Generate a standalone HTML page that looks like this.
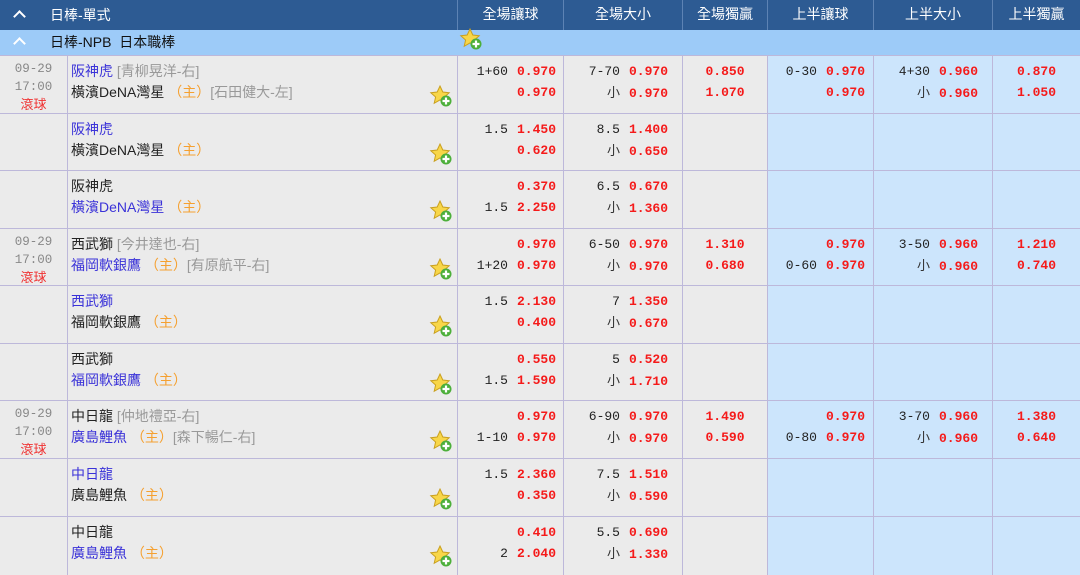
<!DOCTYPE html>
<html><head><meta charset="utf-8">
<style>
*{margin:0;padding:0;box-sizing:border-box}
body{width:1080px;height:561px;overflow:hidden;background:#ebebeb;font-family:"Liberation Sans","Noto Sans CJK TC",sans-serif;position:relative}
.hd{position:absolute;left:0;top:0;width:1080px;height:30px;background:#2d5b93;color:#fff;font-size:14px}
.hd div{position:absolute;top:0;height:30px;line-height:28px;text-align:center;border-left:1px solid #5d83b4}
.sub{position:absolute;left:0;top:30px;width:1080px;height:25px;background:#9dcbf8;font-size:14px;color:#111}
.chev{position:absolute;width:9px;height:9px;border-left:2.5px solid #fff;border-top:2.5px solid #fff;transform:rotate(45deg)}
.row{position:absolute;left:0;width:1080px;height:58px;border-top:1px solid #bdb8da}
.c{position:absolute;top:0;height:58px;border-left:1px solid #bdb8da}
.g{background:#ebebeb}.b{background:#cce5fc}
.t{left:0;width:67px;border-left:none;text-align:center;font-family:"Liberation Mono",monospace;font-size:12.5px;color:#888;line-height:18px;padding-top:4px}
.t span{color:#f03030;font-family:"Liberation Sans","Noto Sans CJK TC",sans-serif;font-size:13px}
.tm{left:67px;width:390px;font-size:14px;line-height:21px;padding:5px 0 0 3px;color:#222}
.bl{color:#3a32d8}.gr{color:#999}.or{color:#f5a030}
.o{font-family:"Liberation Mono",monospace;font-size:13px;line-height:21px;text-align:right;padding-top:5px;color:#222}
.o i{font-style:normal;font-weight:bold;color:#f51a1a;margin-left:9px}
.o .x{font-family:"Liberation Sans","Noto Sans CJK TC",sans-serif;color:#333}
.c1{left:457px;width:106px;padding-right:7px}
.c2{left:563px;width:119px;padding-right:14px}
.c3{left:682px;width:85px;text-align:center}
.c3 i{margin:0}
.c4{left:767px;width:106px;padding-right:8px}
.c5{left:873px;width:119px;padding-right:14px}
.c6{left:992px;width:88px;text-align:center}
.c6 i{margin:0}
.star{position:absolute}
</style></head><body>
<div class="hd">
<span class="chev" style="left:15px;top:12px"></span>
<span style="position:absolute;left:50px;top:5px">日棒-單式</span>
<div style="left:457px;width:106px">全場讓球</div>
<div style="left:563px;width:119px">全場大小</div>
<div style="left:682px;width:85px">全場獨贏</div>
<div style="left:767px;width:106px">上半讓球</div>
<div style="left:873px;width:119px">上半大小</div>
<div style="left:992px;width:88px">上半獨贏</div>
</div>
<div class="sub">
<span class="chev" style="left:15px;top:9px"></span>
<span style="position:absolute;left:50px;top:2px">日棒-NPB&nbsp; 日本職棒</span>
<svg class="star" style="left:459px;top:-3px" width="24" height="24" viewBox="0 0 24 24"><path d="M11 2l2.8 6 6.4.7-4.8 4.3 1.4 6.3L11 16l-5.8 3.3 1.4-6.3L1.8 8.7 8.2 8z" fill="#f8d648" stroke="#c9a020" stroke-width="1"/><circle cx="17" cy="17" r="5.5" fill="#4caf3a"/><path d="M17 13.5v7M13.5 17h7" stroke="#fff" stroke-width="2.2"/></svg>
</div>

<div class="row" style="top:55px">
<div class="c t">09-29<br>17:00<br><span>滾球</span></div>
<div class="c tm g"><span class="bl">阪神虎</span> <span class="gr">[青柳晃洋-右]</span><br>橫濱DeNA灣星 <span class="or">（主）</span><span class="gr">[石田健大-左]</span></div>
<div class="c o g c1">1+60<i>0.970</i><br><i>0.970</i></div>
<div class="c o g c2">7-70<i>0.970</i><br><span class="x">小</span><i>0.970</i></div>
<div class="c o g c3"><i>0.850</i><br><i>1.070</i></div>
<div class="c o b c4">0-30<i>0.970</i><br><i>0.970</i></div>
<div class="c o b c5">4+30<i>0.960</i><br><span class="x">小</span><i>0.960</i></div>
<div class="c o b c6"><i>0.870</i><br><i>1.050</i></div>
</div>
<div class="row" style="top:113px">
<div class="c t"></div>
<div class="c tm g"><span class="bl">阪神虎</span><br>橫濱DeNA灣星 <span class="or">（主）</span></div>
<div class="c o g c1">1.5<i>1.450</i><br><i>0.620</i></div>
<div class="c o g c2">8.5<i>1.400</i><br><span class="x">小</span><i>0.650</i></div>
<div class="c o g c3"></div><div class="c o b c4"></div><div class="c o b c5"></div><div class="c o b c6"></div>
</div>
<div class="row" style="top:170px">
<div class="c t"></div>
<div class="c tm g">阪神虎<br><span class="bl">橫濱DeNA灣星</span> <span class="or">（主）</span></div>
<div class="c o g c1"><i>0.370</i><br>1.5<i>2.250</i></div>
<div class="c o g c2">6.5<i>0.670</i><br><span class="x">小</span><i>1.360</i></div>
<div class="c o g c3"></div><div class="c o b c4"></div><div class="c o b c5"></div><div class="c o b c6"></div>
</div>
<div class="row" style="top:228px">
<div class="c t">09-29<br>17:00<br><span>滾球</span></div>
<div class="c tm g">西武獅 <span class="gr">[今井達也-右]</span><br><span class="bl">福岡軟銀鷹</span> <span class="or">（主）</span><span class="gr">[有原航平-右]</span></div>
<div class="c o g c1"><i>0.970</i><br>1+20<i>0.970</i></div>
<div class="c o g c2">6-50<i>0.970</i><br><span class="x">小</span><i>0.970</i></div>
<div class="c o g c3"><i>1.310</i><br><i>0.680</i></div>
<div class="c o b c4"><i>0.970</i><br>0-60<i>0.970</i></div>
<div class="c o b c5">3-50<i>0.960</i><br><span class="x">小</span><i>0.960</i></div>
<div class="c o b c6"><i>1.210</i><br><i>0.740</i></div>
</div>
<div class="row" style="top:285px">
<div class="c t"></div>
<div class="c tm g"><span class="bl">西武獅</span><br>福岡軟銀鷹 <span class="or">（主）</span></div>
<div class="c o g c1">1.5<i>2.130</i><br><i>0.400</i></div>
<div class="c o g c2">7<i>1.350</i><br><span class="x">小</span><i>0.670</i></div>
<div class="c o g c3"></div><div class="c o b c4"></div><div class="c o b c5"></div><div class="c o b c6"></div>
</div>
<div class="row" style="top:343px">
<div class="c t"></div>
<div class="c tm g">西武獅<br><span class="bl">福岡軟銀鷹</span> <span class="or">（主）</span></div>
<div class="c o g c1"><i>0.550</i><br>1.5<i>1.590</i></div>
<div class="c o g c2">5<i>0.520</i><br><span class="x">小</span><i>1.710</i></div>
<div class="c o g c3"></div><div class="c o b c4"></div><div class="c o b c5"></div><div class="c o b c6"></div>
</div>
<div class="row" style="top:400px">
<div class="c t">09-29<br>17:00<br><span>滾球</span></div>
<div class="c tm g">中日龍 <span class="gr">[仲地禮亞-右]</span><br><span class="bl">廣島鯉魚</span> <span class="or">（主）</span><span class="gr">[森下暢仁-右]</span></div>
<div class="c o g c1"><i>0.970</i><br>1-10<i>0.970</i></div>
<div class="c o g c2">6-90<i>0.970</i><br><span class="x">小</span><i>0.970</i></div>
<div class="c o g c3"><i>1.490</i><br><i>0.590</i></div>
<div class="c o b c4"><i>0.970</i><br>0-80<i>0.970</i></div>
<div class="c o b c5">3-70<i>0.960</i><br><span class="x">小</span><i>0.960</i></div>
<div class="c o b c6"><i>1.380</i><br><i>0.640</i></div>
</div>
<div class="row" style="top:458px">
<div class="c t"></div>
<div class="c tm g"><span class="bl">中日龍</span><br>廣島鯉魚 <span class="or">（主）</span></div>
<div class="c o g c1">1.5<i>2.360</i><br><i>0.350</i></div>
<div class="c o g c2">7.5<i>1.510</i><br><span class="x">小</span><i>0.590</i></div>
<div class="c o g c3"></div><div class="c o b c4"></div><div class="c o b c5"></div><div class="c o b c6"></div>
</div>
<div class="row" style="top:516px">
<div class="c t"></div>
<div class="c tm g">中日龍<br><span class="bl">廣島鯉魚</span> <span class="or">（主）</span></div>
<div class="c o g c1"><i>0.410</i><br>2<i>2.040</i></div>
<div class="c o g c2">5.5<i>0.690</i><br><span class="x">小</span><i>1.330</i></div>
<div class="c o g c3"></div><div class="c o b c4"></div><div class="c o b c5"></div><div class="c o b c6"></div>
</div>

<svg width="0" height="0" style="position:absolute"><defs><g id="st"><path d="M11 2l2.8 6 6.4.7-4.8 4.3 1.4 6.3L11 16l-5.8 3.3 1.4-6.3L1.8 8.7 8.2 8z" fill="#f8d648" stroke="#c9a020" stroke-width="1"/><circle cx="17" cy="17" r="5.5" fill="#4caf3a"/><path d="M17 13.5v7M13.5 17h7" stroke="#fff" stroke-width="2.2"/></g></defs></svg>
<svg class="star" style="left:429px;top:84px" width="24" height="24"><use href="#st"/></svg>
<svg class="star" style="left:429px;top:142px" width="24" height="24"><use href="#st"/></svg>
<svg class="star" style="left:429px;top:199px" width="24" height="24"><use href="#st"/></svg>
<svg class="star" style="left:429px;top:257px" width="24" height="24"><use href="#st"/></svg>
<svg class="star" style="left:429px;top:314px" width="24" height="24"><use href="#st"/></svg>
<svg class="star" style="left:429px;top:372px" width="24" height="24"><use href="#st"/></svg>
<svg class="star" style="left:429px;top:429px" width="24" height="24"><use href="#st"/></svg>
<svg class="star" style="left:429px;top:487px" width="24" height="24"><use href="#st"/></svg>
<svg class="star" style="left:429px;top:544px" width="24" height="24"><use href="#st"/></svg>
</body></html>
